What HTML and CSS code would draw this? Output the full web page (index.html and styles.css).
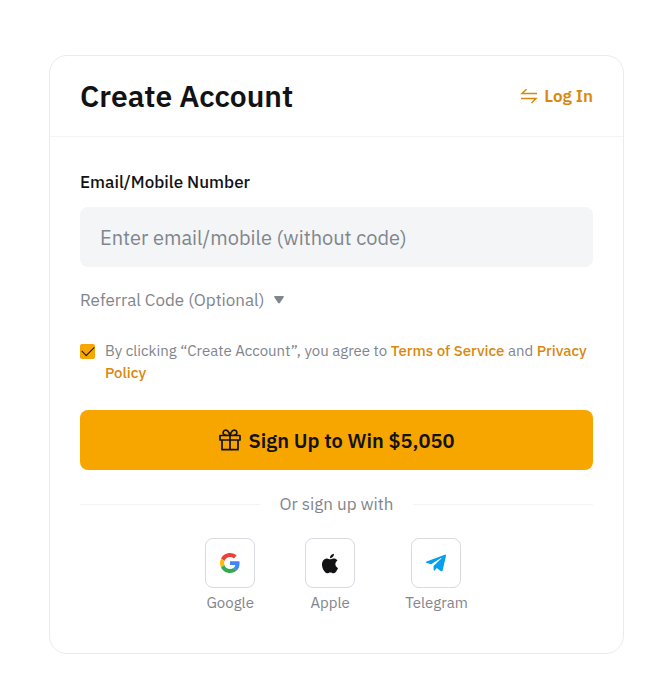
FILE: index.html
```html
<!DOCTYPE html>
<html lang="en">
<head>
  <meta charset="utf-8">
  <meta name="viewport" content="width=device-width, initial-scale=1">
  <title>Create Account</title>
  <link rel="stylesheet" href="styles.css">
</head>
<body>
  <main class="card">
    <header class="card-header">
      <h1 class="title">Create Account</h1>
      <a class="login" href="#login">
        <svg width="18" height="18" viewBox="0 0 18 18" fill="none" stroke="currentColor" stroke-width="1.5" aria-hidden="true">
          <path d="M17 6.500H2L6.500 2.200M1 11.500H16L11.500 16"/>
        </svg>
        Log In
      </a>
    </header>
    <form class="form">
      <label class="field-label" for="account">Email/Mobile Number</label>
      <input class="field" id="account" type="text" placeholder="Enter email/mobile (without code)">
      <button class="referral" type="button">
        Referral Code (Optional)
        <svg width="10" height="8" viewBox="0 0 10 8" fill="currentColor" aria-hidden="true">
          <path d="M1 0H9Q10.500 0 9.700 1.200L5.800 7.100Q5 8 4.200 7.100L.3 1.200Q-.5 0 1 0Z"/>
        </svg>
      </button>
      <div class="terms">
        <input class="check" id="agree" type="checkbox" checked>
        <label class="terms-text" for="agree">By clicking “Create Account”, you agree to <a href="#terms">Terms of Service</a> and <a href="#privacy">Privacy Policy</a></label>
      </div>
      <button class="submit" type="submit">
        <svg width="22" height="22" viewBox="0 0 22 22" fill="none" stroke="currentColor" stroke-width="1.7" stroke-linejoin="round" aria-hidden="true">
          <path d="M1 6.500H21V11H1ZM3 11V20.700H19V11M11 6.500V20.700M11 6.500C4 6.500 3.800 4.800 4.200 3C5 .5 8 .6 9.200 2.500C10 3.700 10.600 5 11 6.500C11.400 5 12 3.700 12.800 2.500C14 .6 17 .5 17.800 3C18.200 4.800 18 6.500 11 6.500Z"/>
        </svg>
        Sign Up to Win $5,050
      </button>
      <div class="divider">Or sign up with</div>
      <div class="socials">
        <button class="social" type="button">
          <span class="social-icon">
            <svg width="20" height="20" viewBox="0 0 48 48" aria-hidden="true">
              <path fill="#ea4335" d="M24 9.500c3.540 0 6.710 1.220 9.210 3.600l6.850-6.850C35.900 2.380 30.470 0 24 0 14.620 0 6.510 5.380 2.560 13.220l7.980 6.190C12.430 13.720 17.740 9.500 24 9.500z"/>
              <path fill="#4285f4" d="M46.980 24.550c0-1.570-.15-3.090-.38-4.550H24v9.020h12.940c-.58 2.960-2.260 5.480-4.780 7.180l7.730 6c4.510-4.180 7.090-10.360 7.090-17.650z"/>
              <path fill="#fbbc05" d="M10.530 28.590c-.48-1.450-.76-2.990-.76-4.590s.27-3.140.76-4.590l-7.980-6.190C.92 16.460 0 20.120 0 24s.92 7.540 2.560 10.780l7.970-6.190z"/>
              <path fill="#34a853" d="M24 48c6.480 0 11.930-2.130 15.890-5.810l-7.730-6c-2.150 1.450-4.920 2.300-8.160 2.300-6.260 0-11.570-4.220-13.470-9.910l-7.980 6.190C6.510 42.620 14.620 48 24 48z"/>
            </svg>
          </span>
          Google
        </button>
        <button class="social" type="button">
          <span class="social-icon">
            <svg width="18" height="21" viewBox="1 0 22 24" fill="#121214" aria-hidden="true">
              <path d="M12.152 6.896c-.948 0-2.415-1.078-3.960-1.040-2.040.027-3.910 1.183-4.961 3.014-2.117 3.675-.546 9.103 1.519 12.090 1.013 1.454 2.208 3.090 3.792 3.039 1.520-.065 2.090-.987 3.935-.987 1.831 0 2.350.987 3.960.948 1.637-.026 2.676-1.480 3.676-2.948 1.156-1.688 1.636-3.325 1.662-3.415-.039-.013-3.182-1.221-3.220-4.857-.026-3.040 2.480-4.494 2.597-4.559-1.429-2.090-3.623-2.324-4.390-2.376-2-.156-3.675 1.090-4.610 1.090zM15.530 3.830c.843-1.012 1.400-2.427 1.245-3.830-1.207.052-2.662.805-3.532 1.818-.780.896-1.454 2.338-1.273 3.714 1.338.104 2.715-.688 3.560-1.702"/>
            </svg>
          </span>
          Apple
        </button>
        <button class="social" type="button">
          <span class="social-icon">
            <svg width="20" height="18" viewBox="0 0 20 18" fill="#059fef" aria-hidden="true">
              <path d="M.6 7.600 18.800.7Q20.200.3 20 1.800L16.700 16.200Q16.300 18 14.700 16.900L10.800 14.100 8.600 16.400Q7.800 17.100 7.700 16L7.500 12.100 15.600 4.200Q15.700 3.700 15 4L5.200 10.200.7 8.900Q-.8 8.300.6 7.600Z"/>
            </svg>
          </span>
          Telegram
        </button>
      </div>
    </form>
  </main>
</body>
</html>
```
FILE: styles.css
```css
* {
  box-sizing: border-box;
}

body {
  margin: 55px 42px 24px 49px;
  background: #fff;
  color: #121214;
  font-family: "IBM Plex Sans", "Noto Sans", sans-serif;
}

button {
  padding: 0;
  border: 0;
  background: none;
  color: inherit;
  font: inherit;
  cursor: pointer;
}

svg {
  flex: none;
}

a {
  color: #d9880d;
  font-weight: 500;
  text-decoration: none;
}

.card {
  border: 1px solid #eaebef;
  border-radius: 18px;
}

.card-header {
  display: flex;
  align-items: center;
  justify-content: space-between;
  padding: 20px 30px;
  border-bottom: 1px solid #f3f4f6;
}

.title {
  margin: 0;
  font-size: 30px;
  font-weight: 600;
  line-height: 40px;
}

.login {
  display: flex;
  align-items: center;
  gap: 6px;
  font-size: 17px;
  font-weight: 600;
}

.form {
  display: flex;
  flex-direction: column;
  padding: 32px 30px 39px;
}

.field-label {
  margin-bottom: 12px;
  font-size: 17px;
  font-weight: 500;
  line-height: 26px;
}

.field {
  width: 100%;
  height: 60px;
  padding: 0 20px;
  border: 0;
  border-radius: 8px;
  background: #f3f5f7;
  color: #121214;
  font: inherit;
  font-size: 20px;
}

.field::placeholder {
  color: #81858c;
  opacity: 1;
}

.referral {
  display: flex;
  align-items: center;
  align-self: flex-start;
  gap: 10px;
  margin-top: 20px;
  color: #81858c;
  font-size: 17px;
  line-height: 26px;
}

.terms {
  display: flex;
  gap: 10px;
  margin-top: 27px;
  color: #81858c;
  font-size: 15px;
  line-height: 22px;
}

.check {
  flex: none;
  width: 15px;
  height: 15px;
  margin: 4px 0;
  border-radius: 2px;
  appearance: none;
  background: #f7a600;
}

.check:checked::before {
  content: "";
  display: block;
  width: 11px;
  height: 6px;
  margin: 2px;
  border: solid #121214;
  border-width: 0 0 1px 1px;
  transform: rotate(-45deg);
}

.submit {
  display: flex;
  align-items: center;
  justify-content: center;
  gap: 8px;
  height: 60px;
  margin-top: 26px;
  border-radius: 8px;
  background: #f7a600;
  font-size: 20px;
  font-weight: 600;
}

.divider {
  display: flex;
  align-items: center;
  gap: 20px;
  margin-top: 21px;
  color: #81858c;
  font-size: 17px;
  line-height: 26px;
}

.divider::before,
.divider::after {
  content: "";
  flex: 1;
  height: 1px;
  background: #f3f4f6;
}

.socials {
  display: flex;
  justify-content: center;
  gap: 50px;
  margin-top: 21px;
}

.social {
  display: flex;
  flex-direction: column;
  align-items: center;
  gap: 4px;
  color: #81858c;
  font-size: 15px;
  line-height: 22px;
}

.social-icon {
  display: grid;
  place-items: center;
  width: 50px;
  height: 50px;
  border: 1px solid #d7dae1;
  border-radius: 8px;
}
```
